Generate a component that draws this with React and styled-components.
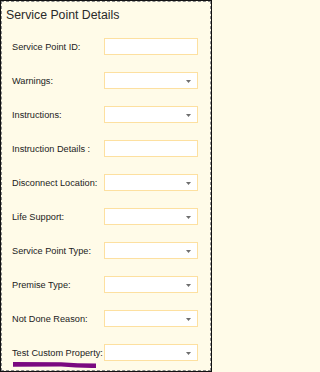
import React from "react";
import styled, { createGlobalStyle } from "styled-components";

const Global = createGlobalStyle`
  html, body { margin: 0; padding: 0; background: #fffbe8; }
  * { box-sizing: border-box; }
`;

const Frame = styled.div`
  width: 212px;
  height: 372px;
  border: 1px solid #111;
  background: #fffbe8;
`;

const Inner = styled.div`
  height: 100%;
  border: 1px dashed #8a8a8a;
  padding: 6px 0 0 0;
  font-family: "Liberation Sans", Arial, sans-serif;
`;

const Title = styled.h2`
  margin: 0;
  padding-left: 4px;
  font-size: 12.3px;
  line-height: 14px;
  font-weight: normal;
  color: #2a2a2a;
`;

const Form = styled.div`
  display: flex;
  flex-direction: column;
  gap: 17px;
  margin-top: 16px;
  padding-left: 10px;
`;

const Row = styled.div`
  display: flex;
  align-items: center;
  height: 17px;
`;

const Label = styled.label`
  position: relative;
  width: 92px;
  flex: none;
  font-size: 9.2px;
  color: #222;
  white-space: nowrap;
  padding-top: 1px;
`;

const Field = styled.div`
  position: relative;
  width: 94px;
  height: 17px;
  background: #fff;
  border: 1.5px solid #fde0a0;
`;

const Arrow = styled.svg`
  position: absolute;
  right: 6px;
  top: 6.5px;
`;

const Scribble = styled.svg`
  position: absolute;
  left: 1px;
  top: 14px;
  pointer-events: none;
`;

const fields = [
  ["Service Point ID:", false],
  ["Warnings:", true],
  ["Instructions:", true],
  ["Instruction Details :", false],
  ["Disconnect Location:", true],
  ["Life Support:", true],
  ["Service Point Type:", true],
  ["Premise Type:", true],
  ["Not Done Reason:", true],
  ["Test Custom Property:", true, true],
];

export default function App() {
  return (
    <>
      <Global />
      <Frame>
        <Inner>
          <Title>Service Point Details</Title>
          <Form>
            {fields.map(([label, select, marked]) => (
              <Row key={label}>
                <Label>
                  {label}
                  {marked && (
                    <Scribble width="84" height="8" viewBox="0 0 84 8">
                      <path
                        d="M0 1 L48 1.2 Q64 2.4 83 2.4 L83 7 Q64 7.2 48 5.6 L0 5.8 Z"
                        fill="#7a0a80"
                      />
                    </Scribble>
                  )}
                </Label>
                <Field>
                  {select && (
                    <Arrow width="5" height="3" viewBox="0 0 5 3">
                      <path d="M0 0 H5 L2.5 3 Z" fill="#6e6e6e" />
                    </Arrow>
                  )}
                </Field>
              </Row>
            ))}
          </Form>
        </Inner>
      </Frame>
    </>
  );
}
